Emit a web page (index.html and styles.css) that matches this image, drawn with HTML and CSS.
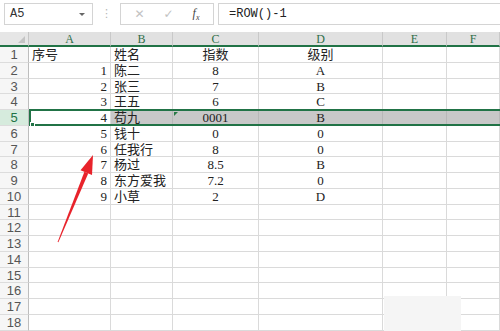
FILE: index.html
```html
<!DOCTYPE html>
<html lang="zh-CN">
<head>
  <meta charset="UTF-8">
  <title>Sheet</title>
  <link rel="stylesheet" href="styles.css">
</head>
<body>
  <div class="app">
    <div class="formula-bar">
      <div class="name-box">A5<span class="caret"></span></div>
      <div class="grip">⋮</div>
      <div class="fx-box">
        <span class="fx-btn">✕</span>
        <span class="fx-btn">✓</span>
        <span class="fx-btn fx">f<sub>x</sub></span>
      </div>
      <div class="formula">=ROW()-1</div>
    </div>

    <div class="sheet">
      <div class="corner"></div>
      <div class="col-head">A</div>
      <div class="col-head">B</div>
      <div class="col-head">C</div>
      <div class="col-head">D</div>
      <div class="col-head">E</div>
      <div class="col-head">F</div>

      <div class="row-head">1</div>
      <div class="cell left">序号</div>
      <div class="cell left">姓名</div>
      <div class="cell center">指数</div>
      <div class="cell center">级别</div>
      <div class="cell"></div><div class="cell"></div>

      <div class="row-head">2</div>
      <div class="cell right">1</div>
      <div class="cell left">陈二</div>
      <div class="cell center">8</div>
      <div class="cell center">A</div>
      <div class="cell"></div><div class="cell"></div>

      <div class="row-head">3</div>
      <div class="cell right">2</div>
      <div class="cell left">张三</div>
      <div class="cell center">7</div>
      <div class="cell center">B</div>
      <div class="cell"></div><div class="cell"></div>

      <div class="row-head">4</div>
      <div class="cell right">3</div>
      <div class="cell left">王五</div>
      <div class="cell center">6</div>
      <div class="cell center">C</div>
      <div class="cell"></div><div class="cell"></div>

      <div class="row-head active">5</div>
      <div class="cell right">4</div>
      <div class="cell left sel">苟九</div>
      <div class="cell center sel warn">0001</div>
      <div class="cell center sel">B</div>
      <div class="cell sel"></div><div class="cell sel"></div>

      <div class="row-head">6</div>
      <div class="cell right">5</div>
      <div class="cell left">钱十</div>
      <div class="cell center">0</div>
      <div class="cell center">0</div>
      <div class="cell"></div><div class="cell"></div>

      <div class="row-head">7</div>
      <div class="cell right">6</div>
      <div class="cell left">任我行</div>
      <div class="cell center">8</div>
      <div class="cell center">0</div>
      <div class="cell"></div><div class="cell"></div>

      <div class="row-head">8</div>
      <div class="cell right">7</div>
      <div class="cell left">杨过</div>
      <div class="cell center">8.5</div>
      <div class="cell center">B</div>
      <div class="cell"></div><div class="cell"></div>

      <div class="row-head">9</div>
      <div class="cell right">8</div>
      <div class="cell left">东方爱我</div>
      <div class="cell center">7.2</div>
      <div class="cell center">0</div>
      <div class="cell"></div><div class="cell"></div>

      <div class="row-head">10</div>
      <div class="cell right">9</div>
      <div class="cell left">小草</div>
      <div class="cell center">2</div>
      <div class="cell center">D</div>
      <div class="cell"></div><div class="cell"></div>

      <div class="row-head">11</div>
      <div class="cell"></div><div class="cell"></div><div class="cell"></div><div class="cell"></div><div class="cell"></div><div class="cell"></div>
      <div class="row-head">12</div>
      <div class="cell"></div><div class="cell"></div><div class="cell"></div><div class="cell"></div><div class="cell"></div><div class="cell"></div>
      <div class="row-head">13</div>
      <div class="cell"></div><div class="cell"></div><div class="cell"></div><div class="cell"></div><div class="cell"></div><div class="cell"></div>
      <div class="row-head">14</div>
      <div class="cell"></div><div class="cell"></div><div class="cell"></div><div class="cell"></div><div class="cell"></div><div class="cell"></div>
      <div class="row-head">15</div>
      <div class="cell"></div><div class="cell"></div><div class="cell"></div><div class="cell"></div><div class="cell"></div><div class="cell"></div>
      <div class="row-head">16</div>
      <div class="cell"></div><div class="cell"></div><div class="cell"></div><div class="cell"></div><div class="cell"></div><div class="cell"></div>
      <div class="row-head">17</div>
      <div class="cell"></div><div class="cell"></div><div class="cell"></div><div class="cell"></div><div class="cell"></div><div class="cell"></div>
      <div class="row-head">18</div>
      <div class="cell"></div><div class="cell"></div><div class="cell"></div><div class="cell"></div><div class="cell"></div><div class="cell"></div>

      <!-- selection outline for row 5 -->
      <div class="selection"><span class="handle"></span></div>
    </div>

    <svg class="arrow" width="500" height="331" viewBox="0 0 500 331">
      <polygon points="57.6,242 58.4,242.3 88.2,173.4 84.4,171.8" fill="#e8232b"/>
      <polygon points="93,155 92,175 80.5,170.3" fill="#e8232b"/>
    </svg>

    <div class="patch"></div>
  </div>
</body>
</html>
```

FILE: styles.css
```css
* {
  box-sizing: border-box;
}

body {
  margin: 0;
  width: 500px;
  height: 331px;
  overflow: hidden;
  background: #fff;
  font-family: "Liberation Serif", "Noto Sans CJK SC", serif;
  font-size: 13px;
  color: #222;
}

.app {
  position: relative;
  width: 500px;
  height: 331px;
  overflow: hidden;
}

/* formula bar */
.formula-bar {
  display: flex;
  align-items: flex-start;
  height: 32px;
  padding-top: 3px;
}

.name-box {
  position: relative;
  margin-left: 4px;
  width: 89px;
  height: 22px;
  border: 1px solid #d4d4d4;
  padding-left: 5px;
  line-height: 20px;
  color: #333;
  font-family: "Liberation Mono", monospace;
  font-size: 12px;
}

.caret {
  position: absolute;
  right: 7px;
  top: 9px;
  border-left: 3px solid transparent;
  border-right: 3px solid transparent;
  border-top: 3px solid #666;
}

.grip {
  width: 27px;
  text-align: center;
  color: #b5b5b5;
  line-height: 22px;
  font-family: "DejaVu Sans", sans-serif;
  font-size: 11px;
}

.fx-box {
  display: flex;
  justify-content: space-around;
  align-items: center;
  width: 94px;
  height: 22px;
  border: 1px solid #d4d4d4;
  padding: 0 4px;
}

.fx-btn {
  color: #c2c2c2;
  font-family: "DejaVu Sans", sans-serif;
  font-size: 12px;
}

.fx-btn.fx {
  color: #444;
  font-family: "Liberation Serif", serif;
  font-style: italic;
  font-size: 12px;
}

.fx sub {
  font-size: 8px;
}

.formula {
  flex: 1;
  margin-left: 4px;
  height: 22px;
  border: 1px solid #d4d4d4;
  border-right: none;
  padding-left: 10px;
  line-height: 20px;
  color: #222;
  font-family: "Liberation Mono", monospace;
  font-size: 12px;
}

/* grid */
.sheet {
  position: relative;
  display: grid;
  grid-template-columns: 29px 82px 62px 86px 124px 64px 53px;
  grid-template-rows: 15px;
  grid-auto-rows: 15.75px;
  line-height: 15px;
}

.corner {
  background: #e6e6e6;
  border-right: 1px solid #c6c6c6;
  border-bottom: 2px solid #217346;
  position: relative;
}

.corner::after {
  content: "";
  position: absolute;
  right: 3px;
  bottom: 2px;
  border-left: 7px solid transparent;
  border-bottom: 7px solid #c4c4c4;
}

.col-head {
  background: #e1e1e1;
  border-right: 1px solid #c9c9c9;
  border-bottom: 2px solid #217346;
  text-align: center;
  color: #2f6e48;
  font-size: 12px;
  line-height: 14px;
}

.row-head {
  background: #f6f6f6;
  border-right: 1px solid #bdbdbd;
  border-bottom: 1px solid #dcdcdc;
  text-align: center;
  color: #555;
  font-family: "Liberation Sans", sans-serif;
  font-size: 13px;
  line-height: 16px;
}

.row-head.active {
  background: #d6ebdd;
  color: #217346;
}

.cell {
  border-right: 1px solid #dadada;
  border-bottom: 1px solid #dadada;
  padding: 0 3px;
  white-space: nowrap;
  line-height: 16px;
}

.left { text-align: left; }
.right { text-align: right; }
.center { text-align: center; }

.sel {
  background: #c8c8c8;
  border-right-color: #b8b8b8;
}

.warn {
  position: relative;
}

.warn::before {
  content: "";
  position: absolute;
  left: 1px;
  top: 2px;
  border-top: 4px solid #2b7a47;
  border-right: 4px solid transparent;
}

.selection {
  position: absolute;
  left: 29px;
  top: 77px;
  width: 471px;
  height: 17px;
  border: 2px solid #217346;
  border-right: none;
  pointer-events: none;
}

.handle {
  position: absolute;
  left: -1px;
  bottom: -3px;
  width: 5px;
  height: 5px;
  background: #217346;
  border: 1px solid #fff;
}

.arrow {
  position: absolute;
  left: 0;
  top: 0;
}

.patch {
  position: absolute;
  left: 384px;
  top: 296px;
  width: 77px;
  height: 35px;
  background: #f5f5f5;
}
```
